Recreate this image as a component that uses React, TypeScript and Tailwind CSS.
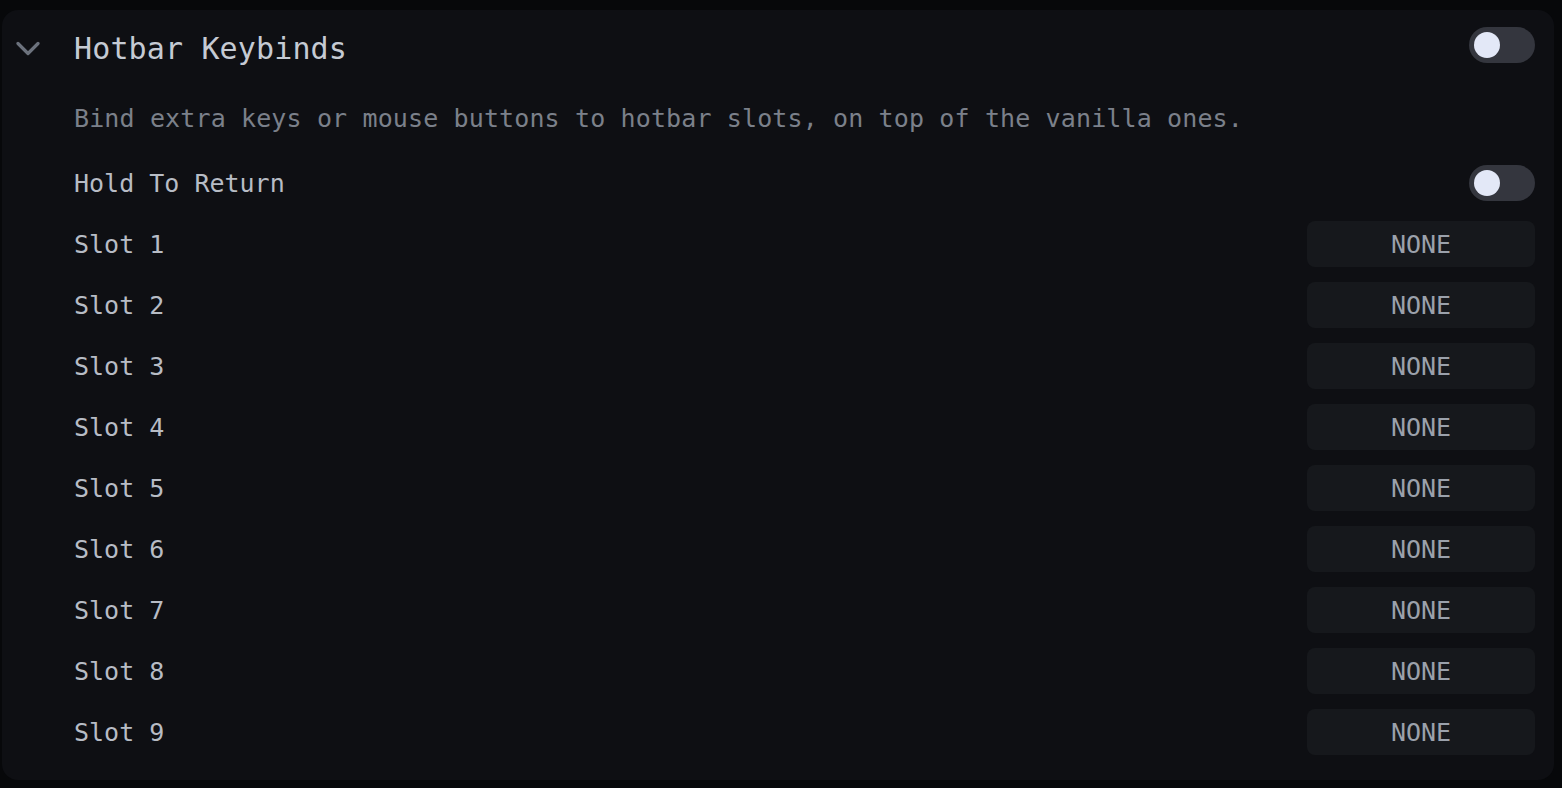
import { useState } from "react";

const slots = [1, 2, 3, 4, 5, 6, 7, 8, 9];

function Toggle({ on, onChange }: { on: boolean; onChange: () => void }) {
  return (
    <button
      onClick={onChange}
      className={`relative h-9 w-[66px] shrink-0 rounded-full transition ${on ? "bg-[#5b6ee1]" : "bg-[#34363e]"}`}
    >
      <span
        className={`absolute top-[5px] h-[26px] w-[26px] rounded-full bg-[#e3e8f7] transition-all ${on ? "left-[35px]" : "left-[5px]"}`}
      />
    </button>
  );
}

export default function App() {
  const [enabled, setEnabled] = useState(false);
  const [holdToReturn, setHoldToReturn] = useState(false);

  return (
    <div
      className="min-h-screen bg-[#07080a] pb-2 pl-[2px] pr-2 pt-[10px]"
      style={{ fontFamily: '"DejaVu Sans Mono", "Liberation Mono", monospace' }}
    >
      <div className="rounded-2xl bg-[#0e0f13] pb-[25px] pl-[14px] pr-[19px] pt-5">
        <div className="flex h-9 items-center">
          <svg width="24" height="16" viewBox="0 0 24 16" className="mt-[2px] shrink-0">
            <polyline
              points="2,2.5 12,12.5 22,2.5"
              fill="none"
              stroke="#6c727d"
              strokeWidth="3.2"
              strokeLinecap="round"
              strokeLinejoin="round"
            />
          </svg>
          <h1 className="ml-[34px] pt-[2px] text-[30px] leading-9 tracking-[0.14px] text-[#c5cad3]">
            Hotbar Keybinds
          </h1>
          <div className="ml-auto">
            <Toggle on={enabled} onChange={() => setEnabled(!enabled)} />
          </div>
        </div>

        <div className="pl-[58px]">
          <p className="mt-[38px] text-[25px] leading-[30px] tracking-[0.13px] text-[#7b808a]">
            Bind extra keys or mouse buttons to hotbar slots, on top of the vanilla ones.
          </p>

          <div className="mt-[31px] flex h-9 items-center justify-between">
            <span className="pt-[2px] text-[25px] text-[#b7bcc5]">Hold To Return</span>
            <Toggle on={holdToReturn} onChange={() => setHoldToReturn(!holdToReturn)} />
          </div>

          <div className="mt-5 flex flex-col gap-[15px]">
            {slots.map((n) => (
              <div key={n} className="flex h-[46px] items-center justify-between">
                <span className="pt-[2px] text-[25px] text-[#b7bcc5]">Slot {n}</span>
                <button className="flex h-[46px] w-[228px] items-center justify-center rounded-lg bg-[#16181c] pt-[2px] text-[25px] text-[#9ba1ab]">
                  NONE
                </button>
              </div>
            ))}
          </div>
        </div>
      </div>
    </div>
  );
}
